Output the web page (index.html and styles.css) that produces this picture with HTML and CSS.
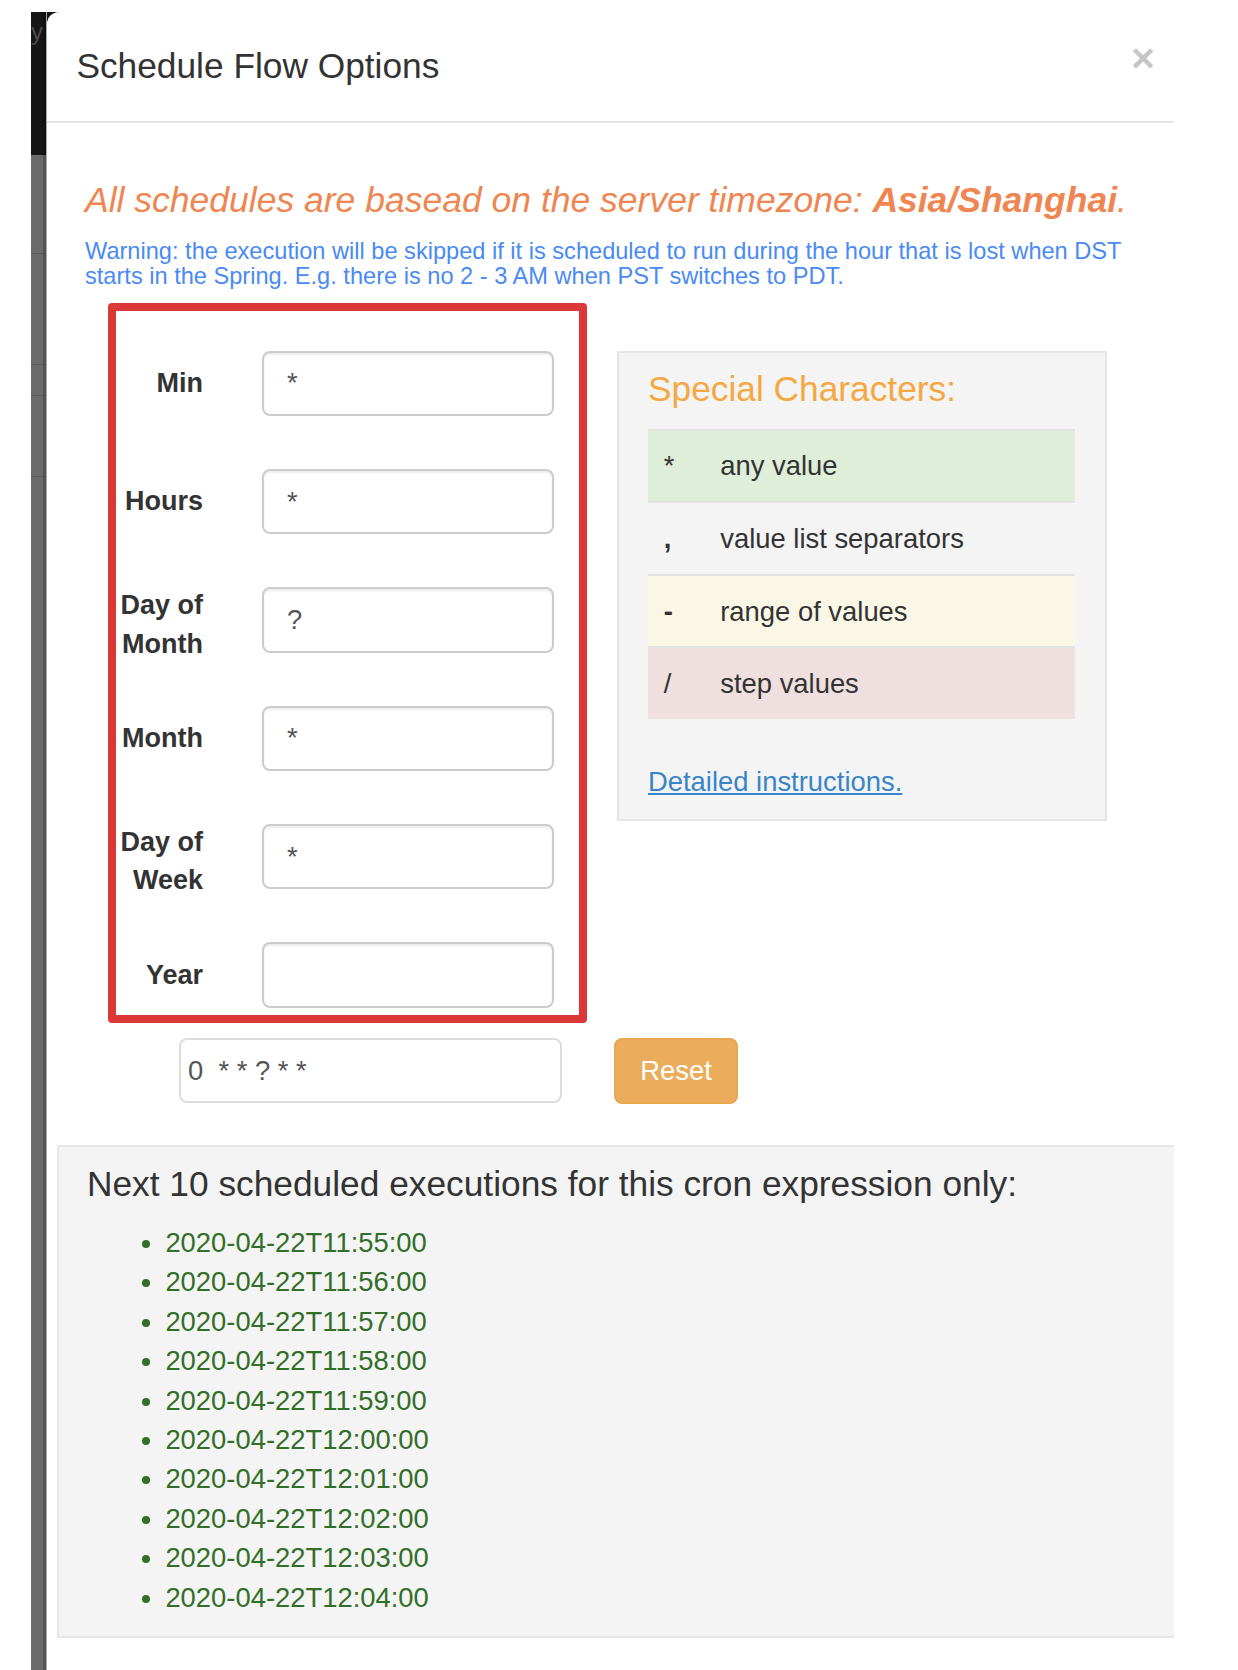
FILE: index.html
```html
<!DOCTYPE html>
<html lang="en">
<head>
<meta charset="utf-8">
<title>Schedule Flow Options</title>
<link rel="stylesheet" href="styles.css">
</head>
<body>
<div class="frame">
  <div class="strip">
    <div class="strip-cap"><span class="strip-y">y</span></div>
    <div class="seg seg1"></div>
    <div class="seg seg2"></div>
    <div class="seg seg3"></div>
    <div class="seg seg4"></div>
  </div>
  <div class="modal">
    <div class="modal-header">
      <h4 class="modal-title">Schedule Flow Options</h4>
      <span class="close">&times;</span>
    </div>
    <div class="modal-body">
      <h4 class="tz"><i>All schedules are basead on the server timezone: <b>Asia/Shanghai</b>.</i></h4>
      <p class="warn">Warning: the execution will be skipped if it is scheduled to run during the hour that is lost when DST starts in the Spring. E.g. there is no 2 - 3 AM when PST switches to PDT.</p>
      <div class="cron-row">
        <div class="red-box">
          <label class="lbl">Min</label><input class="field" type="text" value="*">
          <label class="lbl">Hours</label><input class="field" type="text" value="*">
          <label class="lbl lbl-two">Day of Month</label><input class="field" type="text" value="?">
          <label class="lbl">Month</label><input class="field" type="text" value="*">
          <label class="lbl lbl-two">Day of Week</label><input class="field" type="text" value="*">
          <label class="lbl">Year</label><input class="field" type="text" value="">
        </div>
        <div class="special">
          <h4 class="sc-title">Special Characters:</h4>
          <table class="sc-table">
            <tr class="row-success"><td class="sym">*</td><td>any value</td></tr>
            <tr><td class="sym sym-bold">,</td><td>value list separators</td></tr>
            <tr class="row-warning"><td class="sym sym-bold">-</td><td>range of values</td></tr>
            <tr class="row-danger"><td class="sym">/</td><td>step values</td></tr>
          </table>
          <p class="sc-link"><a href="#">Detailed instructions.</a></p>
        </div>
      </div>
      <div class="expr-row">
        <input class="expr" type="text" value="0  * * ? * *">
        <button class="reset" type="button">Reset</button>
      </div>
    </div>
    <div class="next">
      <h4 class="next-title">Next 10 scheduled executions for this cron expression only:</h4>
      <ul class="next-list">
        <li>2020-04-22T11:55:00</li>
        <li>2020-04-22T11:56:00</li>
        <li>2020-04-22T11:57:00</li>
        <li>2020-04-22T11:58:00</li>
        <li>2020-04-22T11:59:00</li>
        <li>2020-04-22T12:00:00</li>
        <li>2020-04-22T12:01:00</li>
        <li>2020-04-22T12:02:00</li>
        <li>2020-04-22T12:03:00</li>
        <li>2020-04-22T12:04:00</li>
      </ul>
    </div>
  </div>
</div>
</body>
</html>
```

FILE: styles.css
```css
html, body {
  margin: 0;
  padding: 0;
  background: #ffffff;
}

body {
  font-family: "Liberation Sans", Arial, Helvetica, sans-serif;
  color: #333333;
  overflow: hidden;
}

.frame {
  display: flex;
  margin: 12px 0 0 31px;
  width: 1143px;
  min-height: 1658px;
  background: linear-gradient(to bottom, #161616 0, #161616 143px, #6b6b6b 143px, #6b6b6b 100%);
}

/* left backdrop strip */
.strip {
  width: 15px;
  flex: none;
  display: flex;
  flex-direction: column;
  overflow: hidden;
  border-right: 1px solid #a9a9a9;
  box-shadow: inset -3px 0 0 rgba(0, 0, 0, 0.2);
}

.strip-cap {
  height: 143px;
  flex: none;
  overflow: hidden;
}

.strip-y {
  display: block;
  font-size: 24px;
  line-height: 1;
  color: #4a4a4a;
  margin: 8px 0 0 0;
}

.seg {
  flex: none;
  border-bottom: 1px solid rgba(0, 0, 0, 0.14);
}

.seg1 { height: 98px; }
.seg2 { height: 110px; }
.seg3 { height: 30px; }
.seg4 { height: 80px; }

/* modal */
.modal {
  flex: 1;
  min-width: 0;
  background: #ffffff;
  border-top-left-radius: 12px;
}

.modal-header {
  display: flex;
  justify-content: space-between;
  align-items: flex-start;
  padding: 29.4px 19px 29.4px 29.4px;
  border-bottom: 2px solid #e5e5e5;
}

.modal-title {
  margin: 0;
  font-size: 35.3px;
  line-height: 50.4px;
  font-weight: normal;
  color: #333333;
}

.close {
  font-size: 41px;
  font-weight: bold;
  line-height: 1;
  color: #000000;
  opacity: 0.22;
  margin-top: -3px;
}

.modal-body {
  padding: 57.8px 38px 0 38px;
}

.tz {
  margin: 0;
  font-size: 35.5px;
  line-height: 38.8px;
  font-weight: normal;
  color: #ef8550;
}

.warn {
  margin: 18.8px 0 0;
  max-width: 1051px;
  font-size: 23.6px;
  line-height: 25.6px;
  color: #4a8af4;
}

.cron-row {
  display: flex;
  align-items: flex-start;
  margin: 13px 0 0 23px;
}

.red-box {
  width: 479px;
  box-sizing: border-box;
  flex: none;
  border: 8px solid #dc3838;
  border-radius: 4px;
  padding: 40px 25px 7.5px 0;
  display: grid;
  grid-template-columns: 87px 292px;
  grid-auto-rows: 65.3px;
  column-gap: 59px;
  row-gap: 53px;
  align-items: center;
}

.lbl {
  text-align: right;
  font-weight: bold;
  font-size: 27px;
  line-height: 38.6px;
  color: #333333;
}

.lbl-two {
  padding-top: 9px;
}

.field {
  height: 65.3px;
  box-sizing: border-box;
  width: 100%;
  margin: 0;
  border: 2px solid #cccccc;
  border-radius: 8px;
  padding: 0 23px;
  font-family: "Liberation Sans", Arial, sans-serif;
  font-size: 27.4px;
  color: #555555;
  background: #ffffff;
  box-shadow: inset 0 2px 2px rgba(0, 0, 0, 0.075);
}

.special {
  width: 490px;
  box-sizing: border-box;
  flex: none;
  margin: 48px 0 0 30px;
  background: #f4f4f4;
  border: 2px solid #e4e4e4;
  padding: 17.5px 30px 18px 29px;
}

.sc-title {
  margin: 0 0 19.6px;
  font-size: 35.3px;
  line-height: 38.8px;
  font-weight: normal;
  color: #f5a742;
}

.sc-table {
  width: 100%;
  border-collapse: collapse;
}

.sc-table td {
  padding: 15.7px;
  line-height: 39.2px;
  border-top: 2px solid #e2e2e2;
  font-size: 27.4px;
  color: #333333;
  vertical-align: top;
}

.sc-table td.sym {
  width: 25.2px;
}

.sc-table td.sym-bold {
  font-weight: bold;
}

.row-success td { background: #dfeed8; }
.row-warning td { background: #faf7e6; }
.row-danger td { background: #efdfdf; }

.sc-link {
  margin: 42.6px 0 0;
  font-size: 27.4px;
  line-height: 39.2px;
}

.sc-link a {
  color: #3a84c9;
  text-decoration: underline;
}

.expr-row {
  display: flex;
  align-items: center;
  margin: 14.6px 0 0 94px;
}

.expr {
  width: 383px;
  height: 65px;
  box-sizing: border-box;
  margin: 0;
  border: 2px solid #dddddd;
  border-radius: 8px;
  padding: 0 7px;
  font-family: "Liberation Sans", Arial, sans-serif;
  font-size: 27.4px;
  color: #555555;
  background: #ffffff;
  white-space: pre;
}

.reset {
  margin-left: 52px;
  width: 124px;
  height: 66.6px;
  box-sizing: border-box;
  border: 2px solid #e9a850;
  border-radius: 8px;
  background: #ebad5c;
  color: #ffffff;
  font-family: "Liberation Sans", Arial, sans-serif;
  font-size: 27.4px;
  padding: 0;
}

.next {
  margin: 41px 0 0 9.7px;
  background: #f4f4f4;
  border-top: 2px solid #e6e6e6;
  border-bottom: 2px solid #e6e6e6;
  border-left: 2px solid #e6e6e6;
  padding: 17.3px 0 0 28.3px;
}

.next-title {
  margin: 0 0 19.6px;
  font-size: 35.3px;
  line-height: 38.8px;
  font-weight: normal;
  color: #333333;
}

.next-list {
  margin: 0 0 19px;
  padding-left: 78.4px;
}

.next-list li {
  font-size: 27.4px;
  line-height: 39.4px;
  color: #336e28;
}
```
